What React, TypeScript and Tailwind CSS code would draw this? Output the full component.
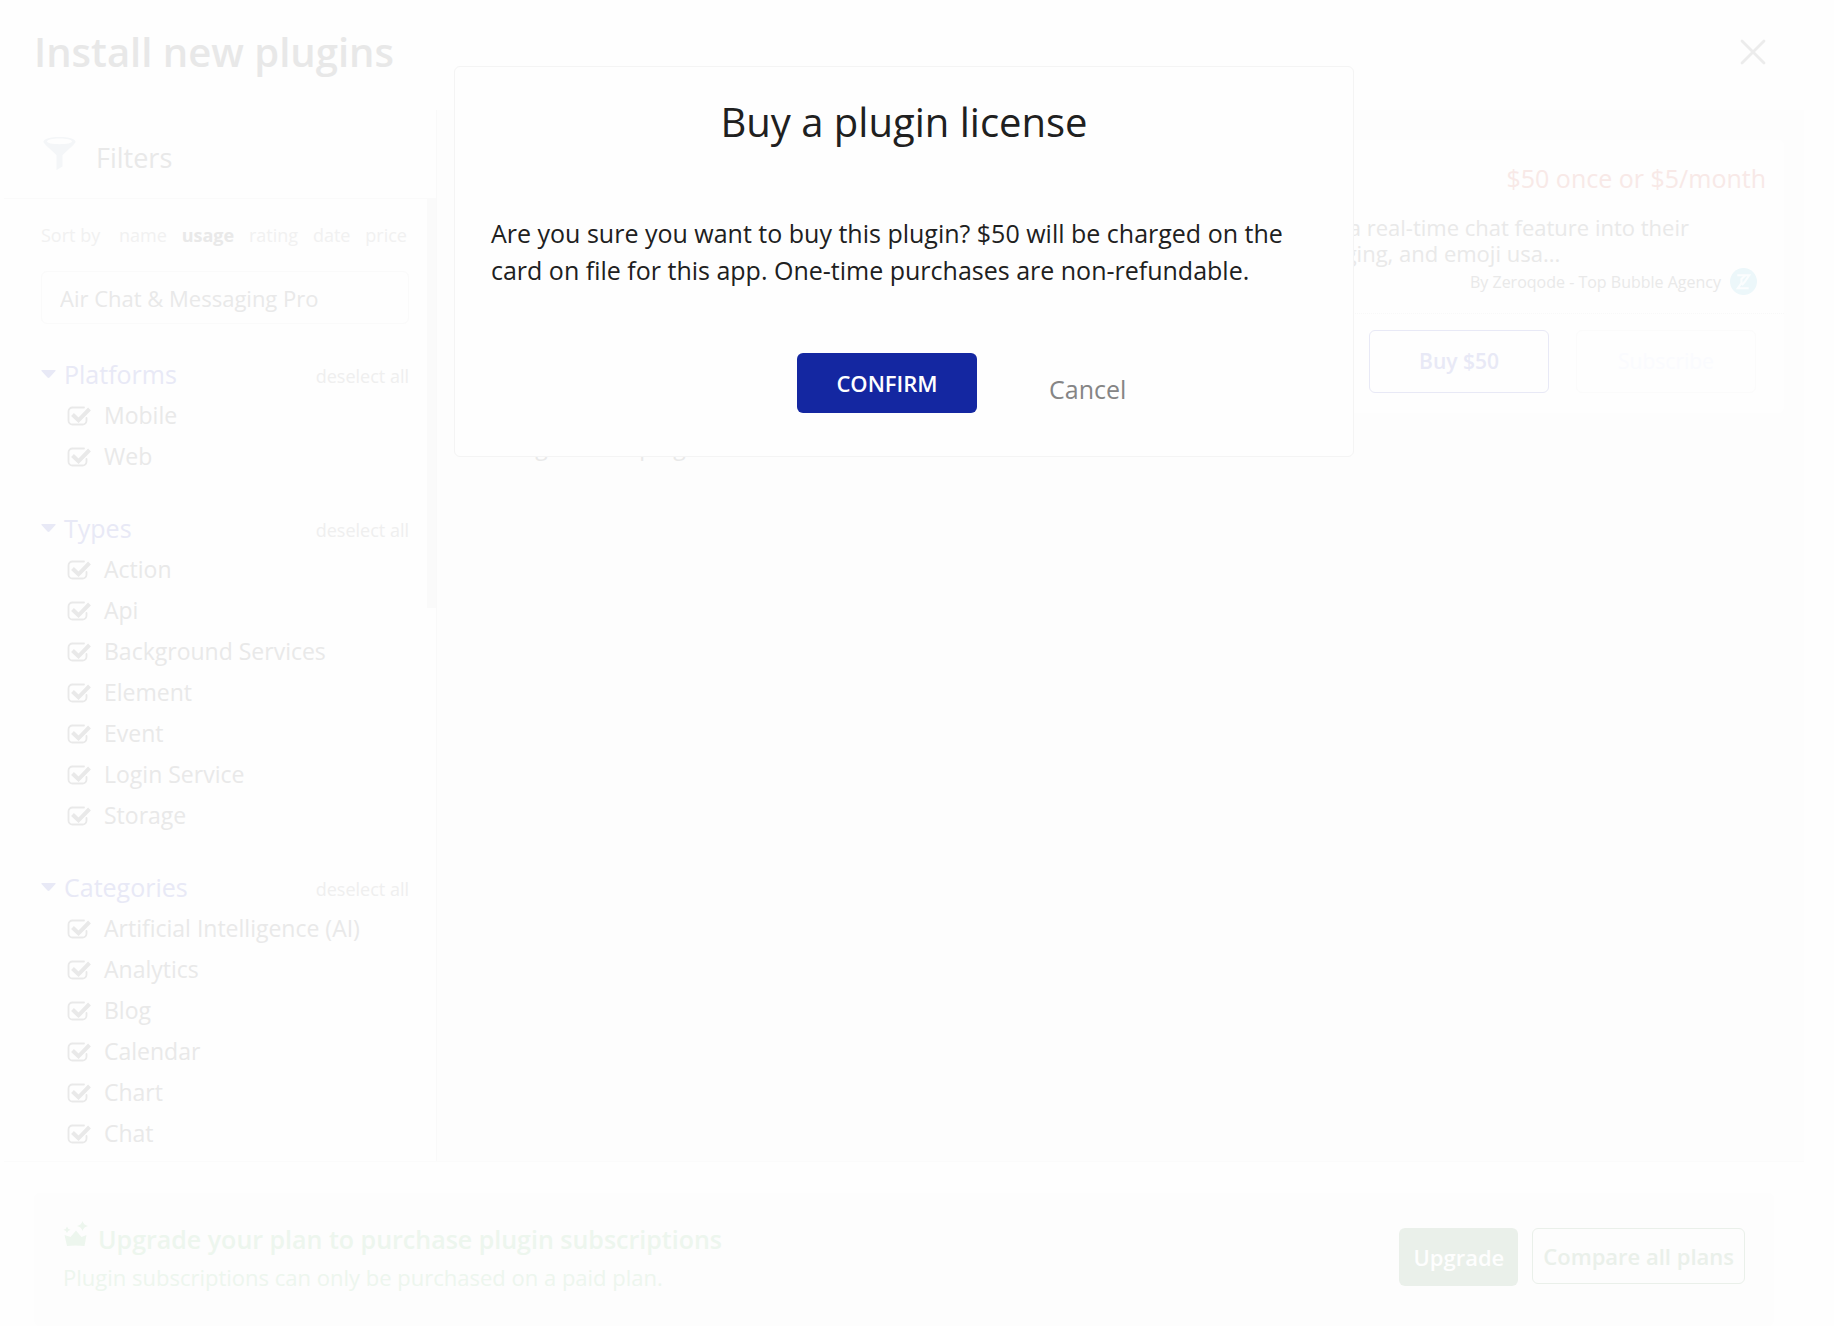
import { useState } from "react";

type FilterSection = {
  title: string;
  items: string[];
};

const SORT_OPTIONS = ["name", "usage", "rating", "date", "price"];

const SECTIONS: FilterSection[] = [
  { title: "Platforms", items: ["Mobile", "Web"] },
  {
    title: "Types",
    items: ["Action", "Api", "Background Services", "Element", "Event", "Login Service", "Storage"],
  },
  {
    title: "Categories",
    items: ["Artificial Intelligence (AI)", "Analytics", "Blog", "Calendar", "Chart", "Chat"],
  },
];

export default function App() {
  return (
    <div className="relative min-h-screen bg-[#fefefe] pl-1 pr-[30px] font-['Open_Sans',sans-serif] text-[#e9e9e9]">
      <div className="flex min-h-screen flex-col">
        <header className="flex h-[110px] items-center justify-between pb-1.5 pl-[30px] pr-[38px]">
          <h1 className="text-[40px] font-semibold leading-[54px] text-[#e8e8e8]">
            Install new plugins
          </h1>
          <button type="button" aria-label="Close">
            <CloseIcon />
          </button>
        </header>
        <div className="flex h-[1052px] border-b border-[#fbfbfb]">
          <Sidebar />
          <main className="min-w-0 flex-1 bg-[#fdfdfd] py-[30px] pl-[30px] pr-5">
            <PluginCard />
            <p className="pt-[17px] text-[23px] leading-8">Missing custom plugins</p>
          </main>
        </div>
        <UpgradeBanner />
      </div>
      <BuyDialog />
    </div>
  );
}

function Sidebar() {
  const [sort, setSort] = useState("usage");

  return (
    <aside className="flex w-[433px] flex-none flex-col overflow-hidden border-r border-[#f9f9f9]">
      <div className="flex h-[89px] flex-none items-start gap-5 border-b border-[#fafafa] pl-[39px] pt-[27px]">
        <FunnelIcon />
        <h2 className="pt-[3px] text-[27px] leading-9">Filters</h2>
      </div>
      <div className="flex min-h-0 flex-1">
        <div className="min-w-0 flex-1 overflow-hidden pl-[37px] pr-[18px] pt-6">
          <div className="flex justify-between pr-0.5 text-lg leading-6 text-[#f1f1f1]">
            <span className="pr-1">Sort by</span>
            {SORT_OPTIONS.map((option) => (
              <button
                key={option}
                type="button"
                onClick={() => setSort(option)}
                className={option === sort ? "font-bold text-[#e9e9e9]" : ""}
              >
                {option}
              </button>
            ))}
          </div>
          <input
            type="text"
            aria-label="Search plugins"
            defaultValue="Air Chat & Messaging Pro"
            className="mt-6 h-[53px] w-full rounded-md border border-[#fafafa] px-[18px] text-[22px] text-[#e9e9e9]"
          />
          <div className="mt-[30px] flex flex-col gap-[31px]">
            {SECTIONS.map((section) => (
              <FilterGroup key={section.title} {...section} />
            ))}
          </div>
        </div>
        <div className="h-[409px] w-[9px] flex-none bg-[#fafafa]" />
      </div>
    </aside>
  );
}

function FilterGroup({ title, items }: FilterSection) {
  const [checked, setChecked] = useState<string[]>(items);

  const toggle = (item: string) =>
    setChecked((prev) => (prev.includes(item) ? prev.filter((i) => i !== item) : [...prev, item]));

  return (
    <section className="leading-[41px]">
      <div className="flex h-[41px] items-start justify-between">
        <h3 className="flex items-center gap-2 text-[25px] text-[#e8e9f6]">
          <svg className="h-2.5 w-[15px] pb-0.5" viewBox="0 0 15 8" fill="currentColor" aria-hidden="true">
            <path d="M1 0H14Q15 0 14.500 1L8.500 7.500Q7.500 8.300 6.500 7.500L0.500 1Q0 0 1 0Z" />
          </svg>
          {title}
        </h3>
        <button type="button" onClick={() => setChecked([])} className="pt-0.5 text-lg leading-[41px] text-[#efefef]">
          deselect all
        </button>
      </div>
      <ul>
        {items.map((item) => (
          <li key={item}>
            <label className="flex items-center gap-[13px] pl-[26px] text-[23px]">
              <span className="grid h-6 w-6 place-items-center">
                <input
                  type="checkbox"
                  checked={checked.includes(item)}
                  onChange={() => toggle(item)}
                  className="col-start-1 row-start-1 h-6 w-6 appearance-none"
                />
                <CheckIcon checked={checked.includes(item)} />
              </span>
              {item}
            </label>
          </li>
        ))}
      </ul>
    </section>
  );
}

function PluginCard() {
  return (
    <article className="rounded-md bg-[#fefefe]">
      <div className="border-b border-dotted border-[#f8f8f8] px-[18px] pb-[18px] pt-5">
        <div className="flex justify-between text-[25px] leading-9">
          <h2>Air Chat & Messaging Pro</h2>
          <p className="text-[#f8e9e7]">$50 once or $5/month</p>
        </div>
        <p className="ml-auto mr-[77px] mt-[18px] w-fit text-[22px] leading-[26px]">
          create a real-time chat feature into their
          <br />
          messaging, and emoji usa...
        </p>
        <div className="flex items-center justify-end gap-[9px] pr-[9px] pt-0.5 text-base leading-[26px]">
          <span>By Zeroqode - Top Bubble Agency</span>
          <AgencyLogo />
        </div>
      </div>
      <div className="flex justify-end gap-[27px] px-7 pb-5 pt-4 text-[21px]">
        <button
          type="button"
          className="h-[63px] w-[180px] rounded-md border border-[#e8e9f6] font-semibold text-[#e8e9f6]"
        >
          Buy $50
        </button>
        <button type="button" className="h-[63px] w-[180px] rounded-md border border-[#fbfbfb] text-[#fafbfe]">
          Subscribe
        </button>
      </div>
    </article>
  );
}

function UpgradeBanner() {
  return (
    <footer className="mx-[30px] mt-[31px] flex flex-1 items-start justify-between rounded-md bg-[#fdfdfd] px-[29px] pt-7 font-semibold">
      <div className="text-[#edf6ee]">
        <h2 className="flex items-start gap-[9px] text-[25px] leading-9">
          <CrownIcon />
          Upgrade your plan to purchase plugin subscriptions
        </h2>
        <p className="pt-1 text-[22px] font-normal leading-8">
          Plugin subscriptions can only be purchased on a paid plan.
        </p>
      </div>
      <div className="flex gap-[14px] pt-[7px] text-[22px]">
        <button type="button" className="h-[58px] rounded-md bg-[#eaf0ea] px-[14px] text-[#fefefe]">
          Upgrade
        </button>
        <button type="button" className="h-14 rounded-md border border-[#eaf0ea] px-2.5 text-[#eaf0ea]">
          Compare all plans
        </button>
      </div>
    </footer>
  );
}

function BuyDialog() {
  return (
    <div className="absolute inset-x-0 top-[66px] flex justify-center pl-1 pr-[30px]">
      <div
        role="dialog"
        aria-labelledby="buy-title"
        className="w-[900px] rounded-md border border-[#f4f4f4] bg-[#fefefe] px-9 pb-[43px] pt-[27px] text-[#202020]"
      >
        <h2 id="buy-title" className="text-center text-[40px] leading-[56px]">
          Buy a plugin license
        </h2>
        <p className="pt-[65px] text-[25px] leading-[37px]">
          Are you sure you want to buy this plugin? $50 will be charged on the card on file for this
          app. One-time purchases are non-refundable.
        </p>
        <div className="flex items-start gap-[72px] pl-[306px] pt-16">
          <button
            type="button"
            className="h-[60px] w-[180px] rounded-md bg-[#1427a1] text-[22px] font-semibold text-white"
          >
            CONFIRM
          </button>
          <button type="button" className="pt-[18px] text-[25px] leading-9 text-[#858585]">
            Cancel
          </button>
        </div>
      </div>
    </div>
  );
}

function CloseIcon() {
  return (
    <svg
      className="h-[26px] w-[26px]"
      viewBox="0 0 26 26"
      fill="none"
      stroke="#ececec"
      strokeWidth={2.8}
      strokeLinecap="round"
      aria-hidden="true"
    >
      <path d="M2 2l22 22M24 2L2 24" />
    </svg>
  );
}

function FunnelIcon() {
  return (
    <svg className="h-[33px] w-[33px]" viewBox="0 0 33 33" aria-hidden="true">
      <path
        fill="#f4f6f8"
        fillRule="evenodd"
        d="M16.500 0C25.500 0 32.500 1.900 32.500 4.600c0 1-.6 1.900-1.700 2.800L19.500 18v11.500L13.500 33V18L2.200 7.400C1.100 6.500.5 5.600.5 4.600.5 1.900 7.500 0 16.500 0zm0 1.600C9.500 1.600 4 2.900 4 4.600s5.500 2.600 12.500 2.600S29 6.300 29 4.600s-5.500-3-12.500-3z"
      />
    </svg>
  );
}

function CheckIcon({ checked }: { checked: boolean }) {
  return (
    <svg
      className="pointer-events-none col-start-1 row-start-1 h-5 w-6"
      viewBox="0 0 24 20"
      fill="none"
      stroke="#e9e9e9"
      aria-hidden="true"
    >
      <path
        strokeWidth={1.8}
        strokeLinecap="round"
        d="M17 1.500H5.500a4 4 0 0 0-4 4v9a4 4 0 0 0 4 4h10a4 4 0 0 0 4-4V12"
      />
      {checked && <path strokeWidth={4} d="M5.500 8.500l6 5.800L22.500 3" />}
    </svg>
  );
}

function AgencyLogo() {
  return (
    <svg className="h-[27px] w-[27px]" viewBox="0 0 26 26" aria-hidden="true">
      <circle cx="13" cy="13" r="13" fill="#ecf7fa" />
      <path
        d="M7 7h11.500l-4.500 6.500-2.500 3M15 7l-4 3.500v4L7.500 19.500H18"
        fill="none"
        stroke="#fbfdfe"
        strokeWidth={2}
      />
    </svg>
  );
}

function CrownIcon() {
  return (
    <svg className="h-[26px] w-[26px]" viewBox="0 0 26 26" fill="currentColor" aria-hidden="true">
      <path d="M1.500 14l6 2 5.500-6.500 5.500 6.500 5-2-2 11q-9-1-17.500 0z" />
      <path d="M19.500 0q1 4 5.500 5-4.500 1-5.500 5-1-4-5.500-5 4.500-1 5.500-5z" />
      <path d="M4 5.500q.6 2.700 3.500 3.300-2.900.6-3.500 3.300-.6-2.700-3.500-3.300 2.900-.6 3.500-3.300z" />
    </svg>
  );
}
